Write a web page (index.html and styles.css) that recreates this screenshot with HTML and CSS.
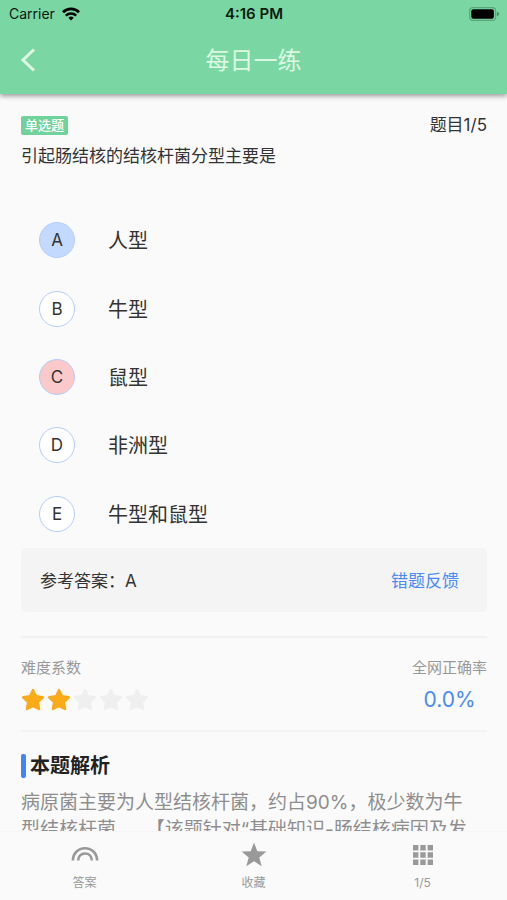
FILE: index.html
```html
<!DOCTYPE html>
<html lang="zh-CN">
<head>
<meta charset="utf-8">
<meta name="viewport" content="width=device-width, initial-scale=1">
<title>每日一练</title>
<link rel="stylesheet" href="styles.css">
</head>
<body>
<svg class="defs" aria-hidden="true">
  <symbol id="star" viewBox="0 0 24 24"><path d="M12 2.200l2.900 6.200 6.900.9-5 4.700 1.200 6.900-6-3.100-6 3.100L7.200 14l-5-4.700 6.900-.9z" fill="currentColor" stroke="currentColor" stroke-width="2.600" stroke-linejoin="round"/></symbol>
</svg>
<header class="top">
  <div class="status">
    <div class="status-left">
      <span>Carrier</span>
      <svg class="wifi" viewBox="0 0 18 14" aria-hidden="true">
        <path d="M1 5.200a11.500 11.500 0 0 1 16 0" fill="none" stroke="currentColor" stroke-width="2.800"/>
        <path d="M3.800 8.600a7.400 7.400 0 0 1 10.400 0" fill="none" stroke="currentColor" stroke-width="2.400"/>
        <path d="M9 13.400L6.300 10.700a3.900 3.900 0 0 1 5.400 0z" fill="currentColor"/>
      </svg>
    </div>
    <time class="clock">4:16 PM</time>
    <div class="status-right">
      <svg class="battery" viewBox="0 0 30 14" aria-hidden="true">
        <rect x="0.600" y="0.600" width="26" height="12.800" rx="3.500" fill="none" stroke="#5ba57c" stroke-width="1.200"/>
        <rect x="2.300" y="2.300" width="22.600" height="9.400" rx="2" fill="#000"/>
        <path d="M28 4.800c1.300.5 1.900 1.200 1.900 2.200s-.6 1.700-1.900 2.200z" fill="#4b8565"/>
      </svg>
    </div>
  </div>
  <nav class="nav">
    <button class="back" type="button" aria-label="返回">
      <svg viewBox="0 0 16 24" aria-hidden="true"><path d="M14 1.500L3 12l11 10.500" fill="none" stroke="currentColor" stroke-width="3"/></svg>
    </button>
    <h1 class="title">每日一练</h1>
  </nav>
</header>

<main class="content">
  <div class="meta">
    <span class="badge">单选题</span>
    <span class="progress">题目1/5</span>
  </div>
  <p class="question">引起肠结核的结核杆菌分型主要是</p>

  <ul class="options">
    <li><button class="option" type="button"><span class="letter correct">A</span><span class="text">人型</span></button></li>
    <li><button class="option" type="button"><span class="letter">B</span><span class="text">牛型</span></button></li>
    <li><button class="option" type="button"><span class="letter wrong">C</span><span class="text">鼠型</span></button></li>
    <li><button class="option" type="button"><span class="letter">D</span><span class="text">非洲型</span></button></li>
    <li><button class="option" type="button"><span class="letter">E</span><span class="text">牛型和鼠型</span></button></li>
  </ul>

  <section class="answer">
    <span>参考答案：A</span>
    <a href="#feedback">错题反馈</a>
  </section>

  <section class="stats">
    <div class="difficulty">
      <span class="label">难度系数</span>
      <div class="stars" role="img" aria-label="2/5">
        <svg class="on"><use href="#star"/></svg>
        <svg class="on"><use href="#star"/></svg>
        <svg><use href="#star"/></svg>
        <svg><use href="#star"/></svg>
        <svg><use href="#star"/></svg>
      </div>
    </div>
    <div class="accuracy">
      <span class="label">全网正确率</span>
      <span class="rate">0.0%</span>
    </div>
  </section>

  <section class="analysis">
    <h2>本题解析</h2>
    <p>病原菌主要为人型结核杆菌，约占90%，极少数为牛型结核杆菌。&nbsp;&nbsp;【该题针对“基础知识-肠结核病因及发</p>
  </section>
</main>

<footer class="tabs">
  <button class="tab" type="button">
    <svg viewBox="0 0 28 28" aria-hidden="true"><path d="M1.900 19.500c0-7 5.200-12.300 12.100-12.300s12.100 5.300 12.100 12.300M7.200 19.500c0-4.200 2.800-7 6.800-7s6.800 2.800 6.800 7" fill="none" stroke="currentColor" stroke-width="2.600"/></svg>
    <span>答案</span>
  </button>
  <button class="tab" type="button">
    <svg viewBox="0 0 28 28" aria-hidden="true"><path d="M14 1.500l3.300 8.700 9.100.4-7.100 5.800 2.400 8.900-7.700-5-7.700 5 2.400-8.900-7.100-5.800 9.100-.4z" fill="currentColor"/></svg>
    <span>收藏</span>
  </button>
  <button class="tab" type="button">
    <svg viewBox="0 0 28 28" aria-hidden="true"><path d="M4 4h5.400v5.400H4zM11.300 4h5.400v5.400h-5.400zM18.600 4H24v5.400h-5.400zM4 11.300h5.400v5.400H4zM11.300 11.300h5.400v5.400h-5.400zM18.600 11.300H24v5.400h-5.400zM4 18.600h5.400V24H4zM11.300 18.600h5.400V24h-5.400zM18.600 18.600H24V24h-5.400z" fill="currentColor"/></svg>
    <span>1/5</span>
  </button>
</footer>
</body>
</html>
```
FILE: styles.css
```css
* {
  box-sizing: border-box;
}

body {
  margin: 0;
  height: 100vh;
  display: flex;
  flex-direction: column;
  background: #fafafa;
  color: #333;
  font-family: Inter, "Noto Sans CJK SC", sans-serif;
}

button {
  padding: 0;
  border: 0;
  background: none;
  color: inherit;
  font: inherit;
  cursor: pointer;
}

h1,
h2,
p,
ul {
  margin: 0;
  padding: 0;
}

.defs {
  display: none;
}

.top {
  position: relative;
  flex: none;
  background: #7ad7a3;
  box-shadow: 0 2px 5px rgba(0, 0, 0, 0.4);
}

.status {
  display: grid;
  grid-template-columns: 1fr auto 1fr;
  align-items: center;
  height: 28px;
  padding: 0 8px 0 9px;
  color: #0b1a12;
  font-size: 14px;
  line-height: 20px;
}

.status-left {
  display: flex;
  align-items: center;
  gap: 7px;
}

.wifi {
  width: 18px;
  height: 14px;
  color: #000;
}

.clock {
  font-size: 15px;
  font-weight: 600;
}

.status-right {
  display: flex;
  justify-content: flex-end;
}

.battery {
  width: 30px;
  height: 14px;
}

.nav {
  display: grid;
  grid-template-columns: 56px 1fr 56px;
  align-items: center;
  height: 66px;
  color: #dcf8e2;
}

.back {
  display: flex;
  justify-content: center;
  padding-bottom: 2px;
}

.back svg {
  width: 16px;
  height: 24px;
}

.title {
  font-size: 24px;
  font-weight: 400;
  line-height: 32px;
  text-align: center;
}

.content {
  flex: 1;
  min-height: 0;
  overflow-y: auto;
  scrollbar-width: none;
  padding: 19px 20px 0 21px;
}

.meta {
  display: flex;
  justify-content: space-between;
  align-items: center;
  height: 24px;
  font-size: 17px;
  line-height: 24px;
}

.badge {
  padding: 0 4px;
  border-radius: 2px;
  background: #6fd39b;
  color: #fff;
  font-size: 13px;
  font-weight: 500;
  line-height: 19px;
}

.question {
  margin-top: 6px;
  font-size: 17px;
  line-height: 26px;
}

.options {
  display: grid;
  grid-template-rows: repeat(5, 1fr);
  height: 342px;
  margin-top: 37px;
  list-style: none;
}

.option {
  display: flex;
  align-items: center;
  gap: 33px;
  width: 100%;
  height: 100%;
  padding-left: 18px;
}

.letter {
  width: 36px;
  height: 36px;
  border: 1px solid #b3cdfb;
  border-radius: 50%;
  background: #fff;
  font-size: 17px;
  line-height: 34px;
  text-align: center;
}

.text {
  padding-top: 2px;
  font-size: 20px;
  line-height: 28px;
}

.correct {
  background: #c3d9fd;
}

.wrong {
  background: #fbc9c9;
}

.answer {
  display: flex;
  justify-content: space-between;
  align-items: center;
  height: 64px;
  padding: 0 28px 2px 19px;
  border-radius: 5px;
  background: #f4f4f4;
  font-size: 17px;
}

.answer a {
  color: #4b8bf4;
  text-decoration: none;
}

.stats {
  display: flex;
  justify-content: space-between;
  height: 96px;
  margin-top: 24px;
  padding-top: 18px;
  border-top: 2px solid #f1f1f1;
  border-bottom: 2px solid #f3f3f3;
}

.label {
  color: #999;
  font-size: 15px;
  line-height: 24px;
}

.difficulty,
.accuracy {
  display: flex;
  flex-direction: column;
  gap: 8px;
}

.accuracy {
  align-items: center;
}

.stars {
  display: flex;
  gap: 2px;
  color: #efefef;
}

.stars svg {
  width: 24px;
  height: 24px;
}

.stars .on {
  color: #fbab18;
}

.rate {
  color: #4b8bf4;
  font-size: 21px;
  line-height: 24px;
}

.analysis h2 {
  display: flex;
  align-items: center;
  gap: 4px;
  margin-top: 20px;
  color: #222;
  font-size: 20px;
  font-weight: 700;
  line-height: 28px;
}

.analysis h2::before {
  content: "";
  width: 5px;
  height: 24px;
  border-radius: 2px;
  background: #4285fb;
}

.analysis p {
  margin-top: 9px;
  padding-right: 12px;
  color: #8e8e8e;
  font-size: 19px;
  line-height: 27px;
}

.tabs {
  flex: none;
  display: grid;
  grid-template-columns: repeat(3, 1fr);
  height: 69px;
  border-top: 1px solid #f6f6f6;
  background: #fafafa;
  color: #999;
}

.tab {
  display: flex;
  flex-direction: column;
  align-items: center;
  gap: 5px;
  padding-top: 9px;
  font-size: 12px;
  line-height: 18px;
}

.tab svg {
  width: 28px;
  height: 28px;
}
```
